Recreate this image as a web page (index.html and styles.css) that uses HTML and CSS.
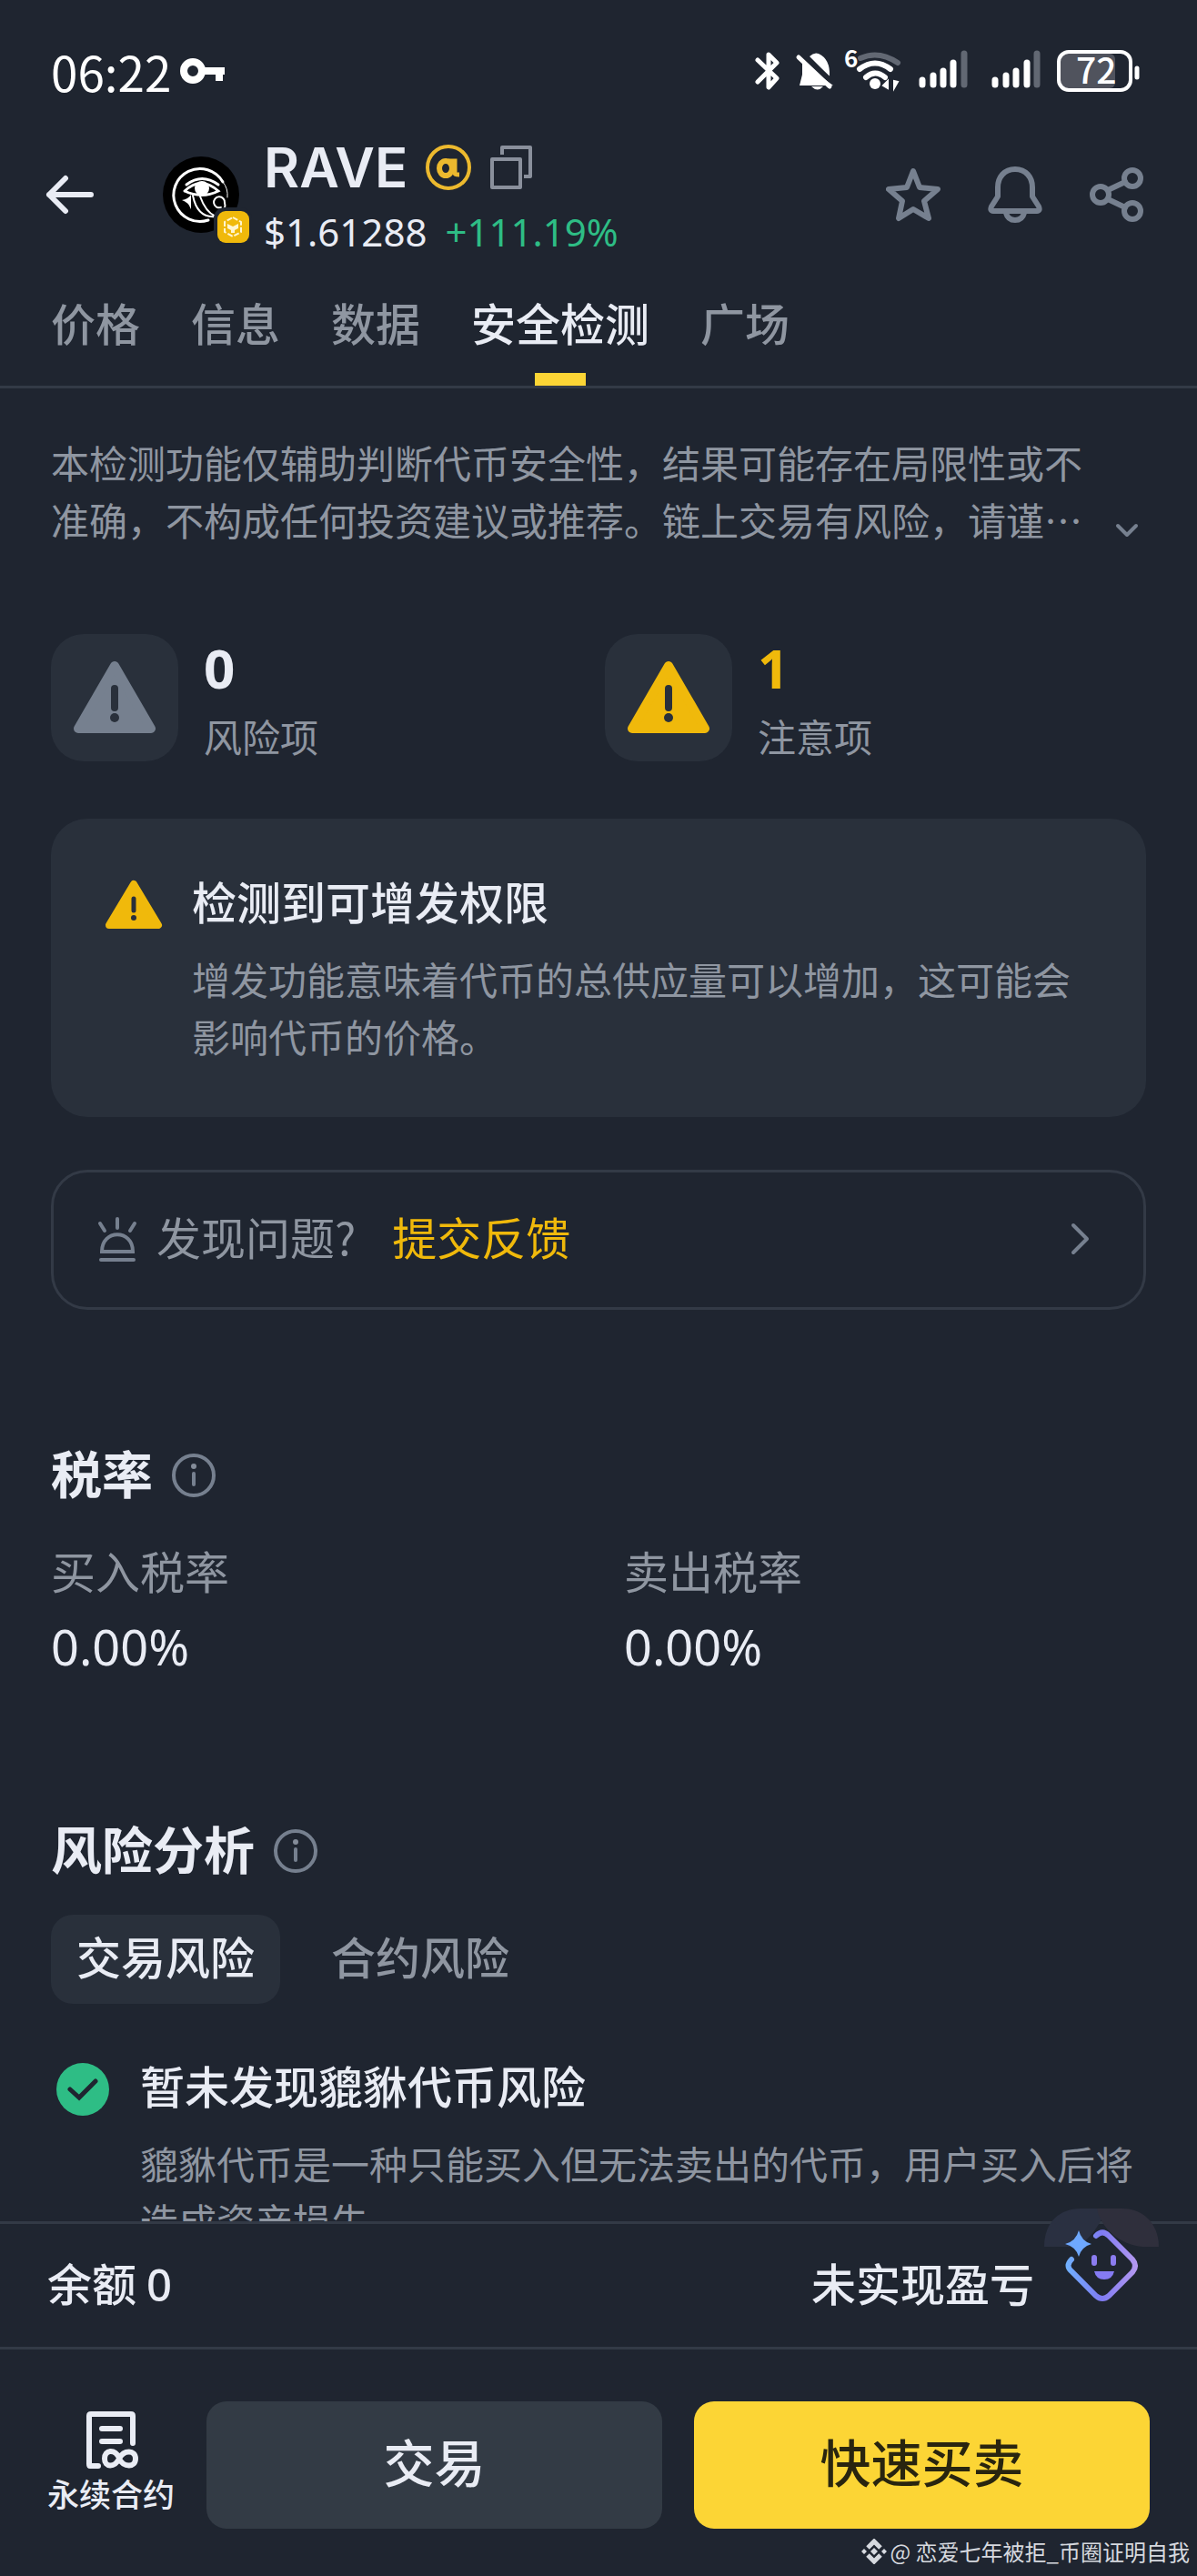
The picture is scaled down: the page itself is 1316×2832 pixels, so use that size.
FILE: index.html
```html
<!DOCTYPE html>
<html lang="zh-CN">
<head>
<meta charset="utf-8">
<meta name="viewport" content="width=device-width, initial-scale=1">
<title>RAVE 安全检测</title>
<link rel="stylesheet" href="styles.css">
</head>
<body>
<div class="app">
  <div class="status">
    <span class="clock">06:22</span>
    <svg class="key" width="50" height="28" viewBox="0 0 50 28" aria-hidden="true"><circle cx="14" cy="14" r="10" fill="none" stroke="#fff" stroke-width="8"/><path d="M25 14H49M43 14V25" fill="none" stroke="#fff" stroke-width="8"/></svg>
    <svg class="status-icons" width="426" height="72" viewBox="0 -12 426 72" aria-hidden="true">
      <g fill="none" stroke="#fff" stroke-width="5" stroke-linecap="round" stroke-linejoin="round">
        <path d="M3 12L24 32L15 42V6L24 15L3 36"/>
      </g>
      <path d="M49 40L52 28V15L86 40ZM60 8Q65 3 70 5Q83 11 82 30ZM62 41H75Q69 48 62 41Z" fill="#fff"/>
      <path d="M48 9L82 41" stroke="#fff" stroke-width="5" stroke-linecap="round"/>
      <path d="M55 8L87 37" stroke="#1f2530" stroke-width="4"/>
      <g fill="none" stroke-width="6" stroke-linecap="round">
        <path d="M116 10Q136 1 157 15" stroke="#626873"/>
        <path d="M115 22Q132 9 149 22M122 31Q132 22 143 31" stroke="#fff"/>
      </g>
      <circle cx="132" cy="38" r="6" fill="#fff"/>
      <path d="M146 43V35L141 40ZM153 35V43L157 36Z" stroke="#fff" stroke-width="2" fill="#fff"/>
      <text class="svg-six" x="98" y="20">6</text>
      <g stroke-width="7" stroke-linecap="round">
        <path d="M184 34V39M196 29V39M207 24V39M218 15V39M264 34V39M276 29V39M287 24V39M299 15V39" stroke="#fff"/>
        <path d="M230 5V39M310 5V39" stroke="#626873"/>
      </g>
      <rect x="336" y="5" width="60" height="38" rx="6" fill="#50535d"/>
      <rect x="334" y="3" width="79" height="42" rx="11" fill="none" stroke="#fff" stroke-width="4"/>
      <path d="M420 21V31" stroke="#fff" stroke-width="5" stroke-linecap="round"/>
      <text class="svg-battery" x="353" y="38">72</text>
    </svg>
  </div>

  <header class="header">
    <button class="icon-button back" aria-label="返回"><svg width="56" height="44" viewBox="0 0 56 44"><path d="M50 22H4M22 4L4 22L22 40" class="stroke-light"/></svg></button>
    <div class="coin">
      <svg width="84" height="84" viewBox="0 0 84 84" aria-hidden="true">
        <circle cx="42" cy="42" r="42" fill="#000"/>
        <g fill="none" stroke="#fff" stroke-linecap="round">
          <path d="M66 28A29 29 0 1 0 50 70" stroke-width="3"/>
          <path d="M66 28Q72 35 71 45" stroke-width="1"/>
          <path d="M24 38Q42 21 61 38Q43 47 24 38M26 31Q43 18 61 31" stroke-width="3"/>
          <path d="M33 43Q38 68 58 66Q47 61 41 44M64 56A6 6 0 1 1 68 51Q70 58 64 59" stroke-width="2"/>
        </g>
        <circle cx="43" cy="35" r="8" fill="#fff"/>
        <path d="M31 42V58Q28 50 21 48Q28 47 31 42" fill="#fff"/>
      </svg>
      <svg class="chain" width="42" height="42" viewBox="0 0 42 42" aria-hidden="true"><rect width="42" height="42" rx="12" fill="#1f2530"/><rect x="4" y="4" width="35" height="35" rx="9" fill="#f0b90b"/><path d="M21 11L30 16V27L21 32L12 27V16Z" fill="none" stroke="#fff5cf" stroke-width="2" stroke-dasharray="6 2"/><path d="M15 18L21 21L27 18V23L23 25V28H19V25L15 23Z" fill="#fff5cf"/></svg>
    </div>
    <div class="token">
      <div class="token-name">
        <h1>RAVE</h1>
        <svg width="50" height="50" viewBox="0 0 50 50" aria-hidden="true"><circle cx="25" cy="25" r="23" fill="none" stroke="#ecb92e" stroke-width="4"/><ellipse cx="22" cy="26" rx="7" ry="8" fill="none" stroke="#ecb92e" stroke-width="6"/><path d="M25 18H32V31Q32 33 37 33" fill="none" stroke="#ecb92e" stroke-width="5"/></svg>
        <button class="icon-button" aria-label="复制"><svg width="48" height="50" viewBox="0 0 48 50"><path d="M3 16H34V47H3ZM14 11V3H45V35H38" fill="none" stroke="#8a909c" stroke-width="4" stroke-linejoin="round"/></svg></button>
      </div>
      <div class="token-price"><span>$1.61288</span><span class="up">+111.19%</span></div>
    </div>
    <div class="header-actions">
      <button class="icon-button" aria-label="收藏"><svg width="60" height="60" viewBox="0 0 60 60"><path d="M30 4L37 22L57 24L42 37L47 56L30 46L14 56L18 37L3 24L23 22Z" class="stroke-gray"/></svg></button>
      <button class="icon-button" aria-label="提醒"><svg width="60" height="64" viewBox="0 0 60 64"><path d="M30 4C18 4 11 13 11 24V34L4 45Q2 50 6 50H54Q58 50 56 45L49 34V24C49 13 42 4 30 4ZM20 52Q22 60 30 60Q38 60 40 52" class="stroke-gray"/></svg></button>
      <button class="icon-button" aria-label="分享"><svg width="60" height="62" viewBox="0 0 60 62"><circle cx="12" cy="31" r="9" class="stroke-gray"/><circle cx="47" cy="13" r="9" class="stroke-gray"/><circle cx="47" cy="49" r="9" class="stroke-gray"/><path d="M20 26L39 17M20 36L39 45" class="stroke-gray"/></svg></button>
    </div>
  </header>

  <nav class="tabs">
    <a href="#price">价格</a>
    <a href="#info">信息</a>
    <a href="#data">数据</a>
    <a href="#safety" class="active" aria-current="page">安全检测</a>
    <a href="#square">广场</a>
  </nav>

  <main class="content">
    <div class="notice">
      <p>本检测功能仅辅助判断代币安全性，结果可能存在局限性或不准确，不构成任何投资建议或推荐。链上交易有风险，请谨…</p>
      <button class="icon-button" aria-label="展开"><svg width="26" height="38" viewBox="0 0 26 38"><path d="M3 14L13 24L23 14" class="stroke-gray thin"/></svg></button>
    </div>

    <div class="stats">
      <div class="stat">
        <div class="stat-icon"><svg width="92" height="82" viewBox="0 0 92 82" aria-hidden="true"><path d="M46 6L86 75H6Z" fill="#76808f" stroke="#76808f" stroke-width="10" stroke-linejoin="round"/><path d="M46 31V52" stroke="#29303b" stroke-width="8" stroke-linecap="round"/><circle cx="46" cy="63" r="5" fill="#29303b"/></svg></div>
        <div class="stat-text"><strong>0</strong><span>风险项</span></div>
      </div>
      <div class="stat">
        <div class="stat-icon"><svg width="92" height="82" viewBox="0 0 92 82" aria-hidden="true"><path d="M46 6L86 75H6Z" fill="#f0b90b" stroke="#f0b90b" stroke-width="10" stroke-linejoin="round"/><path d="M46 31V52" stroke="#29303b" stroke-width="8" stroke-linecap="round"/><circle cx="46" cy="63" r="5" fill="#29303b"/></svg></div>
        <div class="stat-text warn"><strong>1</strong><span>注意项</span></div>
      </div>
    </div>

    <section class="alert">
      <svg width="68" height="64" viewBox="0 0 68 64" aria-hidden="true"><path d="M35 14L62 59H8Z" fill="#f0b90b" stroke="#f0b90b" stroke-width="8" stroke-linejoin="round"/><path d="M35 30V43" stroke="#29303b" stroke-width="5" stroke-linecap="round"/><circle cx="35" cy="51" r="3" fill="#29303b"/></svg>
      <div>
        <h2 class="item-title">检测到可增发权限</h2>
        <p class="item-text">增发功能意味着代币的总供应量可以增加，这可能会影响代币的价格。</p>
      </div>
    </section>

    <a class="feedback" href="#feedback">
      <svg width="56" height="60" viewBox="0 0 56 60" aria-hidden="true"><path d="M8 47C8 22 42 22 42 47ZM7 56H43M25 11V21M6 16L11 24M44 16L39 24" fill="none" stroke="#76808f" stroke-width="4" stroke-linecap="round"/></svg>
      <span>发现问题?</span>
      <span class="feedback-link">提交反馈</span>
      <svg class="feedback-arrow" width="24" height="60" viewBox="0 0 24 60" aria-hidden="true"><path d="M3 18L18 33L3 48" class="stroke-gray thin"/></svg>
    </a>

    <section class="tax">
      <div class="section-title">
        <h2>税率</h2>
        <button class="icon-button" aria-label="税率说明"><svg width="54" height="64" viewBox="0 0 54 64"><circle cx="27" cy="36" r="22" class="stroke-gray thin"/><path d="M27 34V46" class="stroke-gray thin"/><circle cx="27" cy="26" r="3" fill="#848c99"/></svg></button>
      </div>
      <dl class="tax-grid">
        <div><dt>买入税率</dt><dd>0.00%</dd></div>
        <div><dt>卖出税率</dt><dd>0.00%</dd></div>
      </dl>
    </section>

    <section class="risk">
      <div class="section-title">
        <h2>风险分析</h2>
        <button class="icon-button" aria-label="风险分析说明"><svg width="54" height="64" viewBox="0 0 54 64"><circle cx="27" cy="36" r="22" class="stroke-gray thin"/><path d="M27 34V46" class="stroke-gray thin"/><circle cx="27" cy="26" r="3" fill="#848c99"/></svg></button>
      </div>
      <div class="chips">
        <button class="chip selected">交易风险</button>
        <button class="chip">合约风险</button>
      </div>
      <article class="risk-item">
        <svg width="68" height="72" viewBox="0 0 68 72" aria-hidden="true"><circle cx="35" cy="37" r="29" fill="#2ebd85"/><path d="M21 37L31 46L49 28" fill="none" stroke="#1f2530" stroke-width="5" stroke-linecap="round"/></svg>
        <div>
          <h3 class="item-title">暂未发现貔貅代币风险</h3>
          <p class="item-text">貔貅代币是一种只能买入但无法卖出的代币，用户买入后将造成资产损失</p>
        </div>
      </article>
    </section>
  </main>

  <footer class="dock">
    <div class="balance">
      <span>余额 <span class="amount">0</span></span>
      <span class="pnl">未实现盈亏</span>
      <button class="icon-button assistant" aria-label="AI 助手">
        <svg width="126" height="106" viewBox="0 0 126 106">
          <defs><linearGradient id="ai" x1="22" y1="60" x2="104" y2="60" gradientUnits="userSpaceOnUse"><stop offset="0" stop-color="#6fb4ff"/><stop offset=".5" stop-color="#7f7bf3"/><stop offset="1" stop-color="#b79af0"/></linearGradient></defs>
          <path d="M0 42C0 14 18 0 40 0H68C62 18 50 34 36 42Z" fill="#2a3041"/>
          <path d="M58 0H86C110 0 126 18 126 42H108C84 40 62 22 58 0Z" fill="#2f2f3c"/>
          <path d="M57 30Q64 23 71 30L97 56Q103 63 97 70L71 96Q64 102 57 96L30 69Q23 63 30 56" fill="none" stroke="url(#ai)" stroke-width="6" stroke-linecap="round"/>
          <path d="M38 24Q41 36 52 39Q41 42 38 53Q35 42 23 39Q35 36 38 24Z" fill="#6ea8ff"/>
          <path d="M55 54V60M76 54V60" stroke="#8b7cf0" stroke-width="6" stroke-linecap="round"/>
          <path d="M55 69H77Q75 78 66 78Q57 78 55 69Z" fill="#857bf3"/>
        </svg>
      </button>
    </div>
    <div class="actions">
      <button class="perp">
        <svg width="64" height="64" viewBox="0 0 64 64" aria-hidden="true"><path d="M18 61H9Q8 61 8 59V6Q8 4 10 4H54Q56 4 56 6V36M22 20H42M22 34H42M41 52C36 42 25 43 25 53C25 63 36 63 41 53C46 43 59 43 59 53C59 63 46 63 41 53" class="stroke-light"/></svg>
        <span>永续合约</span>
      </button>
      <button class="action secondary">交易</button>
      <button class="action primary">快速买卖</button>
    </div>
    <div class="credit">
      <svg width="28" height="28" viewBox="0 0 28 28" aria-hidden="true"><path d="M7 10L14 3L21 10M7 18L14 25L21 18" fill="none" stroke="#d6d9df" stroke-width="5"/><path d="M14 10L18 14L14 18L10 14ZM3 11L6 14L3 17L0 14ZM25 11L28 14L25 17L22 14Z" fill="#d6d9df"/></svg>
      <span>@ 恋爱七年被拒_币圈证明自我</span>
    </div>
  </footer>
</div>
</body>
</html>
```
FILE: styles.css
```css
:root {
  --bg: #1f2530;
  --card: #29303b;
  --line: #333a46;
  --text: #e9ecf4;
  --muted: #8f96a1;
  --yellow: #f0b90b;
  --han: "Noto Sans CJK SC", "Noto Sans", sans-serif;
  --num: "Noto Sans", "Noto Sans CJK SC", sans-serif;
}

* {
  box-sizing: border-box;
  margin: 0;
  padding: 0;
}

body {
  background: var(--bg);
  color: var(--text);
  font-family: var(--han);
  font-size: 49px;
}

svg {
  display: block;
  flex: none;
}

a {
  color: inherit;
  text-decoration: none;
}

button {
  border: 0;
  background: none;
  color: inherit;
  font: inherit;
}

.icon-button {
  flex: none;
}

.stroke-light,
.stroke-gray {
  fill: none;
  stroke: var(--text);
  stroke-width: 6;
  stroke-linecap: round;
  stroke-linejoin: round;
}

.stroke-gray {
  stroke: #76808f;
}

.thin {
  stroke-width: 4;
}

.app {
  display: flex;
  flex-direction: column;
  height: 100vh;
}

/* Status bar */
.status {
  display: flex;
  align-items: center;
  gap: 10px;
  padding: 42px 60px 0 56px;
  color: #fff;
}

.clock {
  font-size: 53px;
  line-height: 56px;
}

.status-icons {
  margin-left: auto;
}

.svg-six {
  fill: #fff;
  font-size: 26px;
  font-weight: 700;
}

.svg-battery {
  fill: #fff;
  font-size: 39px;
  font-weight: 500;
}

/* Token header */
.header {
  display: flex;
  align-items: center;
  padding: 34px 58px 0 50px;
}

.coin {
  position: relative;
  margin: 0 27px 0 73px;
}

.chain {
  position: absolute;
  right: -14px;
  bottom: -14px;
}

.token {
  display: flex;
  flex-direction: column;
  gap: 11px;
}

.token-name {
  display: flex;
  align-items: center;
  gap: 20px;
  height: 72px;
}

.token-name h1 {
  font-family: Inter, sans-serif;
  font-size: 60px;
  font-weight: 600;
  line-height: 72px;
}

.token-price {
  display: flex;
  gap: 20px;
  font-family: var(--num);
  font-size: 42px;
  line-height: 48px;
}

.up {
  color: #2ebd85;
}

.header-actions {
  display: flex;
  align-items: center;
  gap: 52px;
  margin-left: auto;
}

/* Tabs */
.tabs {
  display: flex;
  gap: 56px;
  padding: 47px 56px 0;
  border-bottom: 3px solid var(--line);
  color: var(--muted);
  font-weight: 500;
  line-height: 56px;
}

.tabs a::after {
  content: "";
  display: block;
  width: 56px;
  height: 14px;
  margin: 28px auto 0;
}

.tabs .active {
  color: var(--text);
}

.tabs .active::after {
  background: #fcd535;
}

/* Scrolling content */
.content {
  flex: 1;
  min-height: 0;
  overflow-y: auto;
  scrollbar-width: none;
  padding: 49px 56px 0;
}

.notice {
  display: flex;
  align-items: flex-end;
  justify-content: space-between;
  gap: 20px;
  margin-right: 8px;
  color: var(--muted);
  font-size: 42px;
  line-height: 63px;
}

.stats {
  display: grid;
  grid-template-columns: 1fr 1fr;
  gap: 14px;
  margin-top: 95px;
}

.stat {
  display: flex;
  align-items: center;
  gap: 28px;
}

.stat-icon {
  display: grid;
  place-items: center;
  width: 140px;
  height: 140px;
  border-radius: 36px;
  background: var(--card);
}

.stat-text {
  display: flex;
  flex-direction: column;
  gap: 10px;
}

.stat-text strong {
  font-family: var(--num);
  font-size: 60px;
  line-height: 74px;
}

.stat-text span {
  color: var(--muted);
  font-size: 42px;
  line-height: 56px;
}

.warn strong {
  color: var(--yellow);
}

.alert {
  display: flex;
  gap: 31px;
  margin-top: 63px;
  padding: 58px 56px;
  border-radius: 40px;
  background: var(--card);
}

.item-title {
  font-size: 49px;
  font-weight: 500;
  line-height: 64px;
}

.item-text {
  margin-top: 22px;
  color: var(--muted);
  font-size: 42px;
  line-height: 63px;
}

.feedback {
  display: flex;
  margin-top: 58px;
  padding: 40px 56px 48px 45px;
  border: 3px solid var(--line);
  border-radius: 40px;
  color: var(--muted);
  line-height: 60px;
  gap: 12px;
}

.feedback-link {
  margin-left: 28px;
  color: var(--yellow);
}

.feedback-arrow {
  margin-left: auto;
}

.section-title {
  display: flex;
  align-items: center;
  gap: 18px;
}

.section-title h2 {
  font-size: 56px;
  font-weight: 700;
  line-height: 72px;
}

.tax {
  margin-top: 142px;
}

.tax-grid {
  display: grid;
  grid-template-columns: 1fr 1fr;
  gap: 56px;
  margin-top: 42px;
}

.tax-grid dt {
  color: var(--muted);
  line-height: 60px;
}

.tax-grid dd {
  margin-top: 18px;
  font-family: var(--num);
  font-size: 54px;
  line-height: 72px;
}

.risk {
  margin-top: 149px;
}

.chips {
  display: flex;
  gap: 28px;
  margin-top: 38px;
}

.chip {
  padding: 15px 28px 23px;
  border-radius: 24px;
  color: var(--muted);
  font-weight: 500;
  line-height: 60px;
}

.chip.selected {
  background: var(--card);
  color: var(--text);
}

.risk-item {
  display: flex;
  gap: 30px;
  margin-top: 57px;
}

/* Bottom dock */
.dock {
  border-top: 3px solid var(--line);
  background: var(--bg);
}

.balance {
  position: relative;
  display: flex;
  justify-content: space-between;
  padding: 34px 52px 39px;
  border-bottom: 3px solid var(--line);
  font-weight: 500;
  line-height: 60px;
}

.amount {
  font-family: var(--num);
}

.pnl {
  margin-right: 127px;
}

.assistant {
  position: absolute;
  top: -17px;
  right: 42px;
}

.actions {
  display: flex;
  gap: 35px;
  padding: 57px 52px 0;
}

.perp {
  display: flex;
  flex: none;
  flex-direction: column;
  align-items: center;
  gap: 3px;
  width: 140px;
  padding-top: 10px;
  font-size: 35px;
  font-weight: 500;
  line-height: 48px;
}

.action {
  flex: 1;
  height: 140px;
  padding-bottom: 12px;
  border-radius: 22px;
  font-size: 56px;
  font-weight: 500;
}

.secondary {
  background: #333b45;
}

.primary {
  background: #fcd535;
  color: #29250f;
}

.credit {
  display: flex;
  align-items: center;
  justify-content: flex-end;
  gap: 4px;
  padding: 7px 8px 9px;
  color: #d6d9df;
  font-size: 24px;
  line-height: 36px;
}
```
